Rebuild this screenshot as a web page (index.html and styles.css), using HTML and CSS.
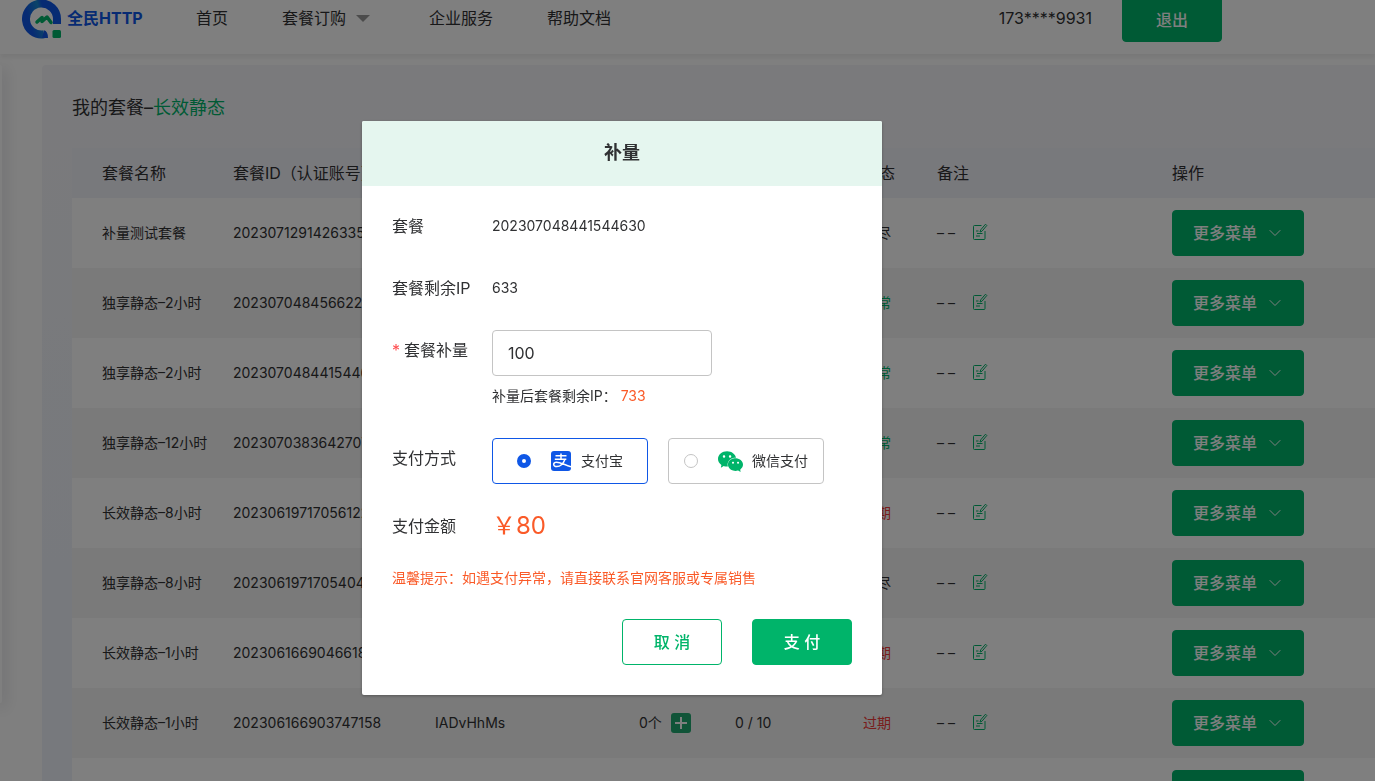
FILE: index.html
```html
<!DOCTYPE html>
<html lang="zh-CN">
<head>
<meta charset="utf-8">
<title>全民HTTP</title>
<link rel="stylesheet" href="styles.css">
</head>
<body>
<svg class="defs" aria-hidden="true">
  <symbol id="note" viewBox="0 0 16 18">
    <path d="M9.500 2.500H2.500a1 1 0 0 0-1 1V15.500a1 1 0 0 0 1 1h9.500a1 1 0 0 0 1-1V8" />
    <path d="M13.500 1.200l1.300 1.300-4.800 5.700-2 .8.700-2.100zM4 8h2.500M5 10.500h5.500M4 13h4" />
  </symbol>
  <symbol id="chevron" viewBox="0 0 12 8">
    <path d="M.7 1.200L6 6.500l5.300-5.300" />
  </symbol>
</svg>

<header class="topbar">
  <a class="logo" href="#">
    <svg class="logo-mark" viewBox="0 0 40 40" aria-hidden="true">
      <defs><linearGradient id="ring" x1="0" y1="0.200" x2="0.700" y2="0">
        <stop offset="0" stop-color="#0f57e6"/><stop offset="0.550" stop-color="#1689d2"/><stop offset="0.750" stop-color="#0f57e6"/>
      </linearGradient></defs>
      <path d="M35 25V20A15.500 15.500 0 1 0 22 35.300" fill="none" stroke="url(#ring)" stroke-width="8"/>
      <path d="M22 31.300q4 1 4 7.700h-6zM31 21h8v4h-8z" fill="#0f57e6"/>
      <path d="M15 23l5-4.500v4l5-4.500 4 5.500" fill="none" stroke="#00b46a" stroke-width="3.500" stroke-linecap="round" stroke-linejoin="round"/>
      <rect x="30.500" y="31" width="8.500" height="8" rx="1.500" fill="#00b46a"/>
    </svg>
    <span>全民HTTP</span>
  </a>
  <nav class="nav">
    <a href="#">首页</a>
    <a class="has-menu" href="#">套餐订购</a>
    <a href="#">企业服务</a>
    <a href="#">帮助文档</a>
  </nav>
  <span class="phone">173****9931</span>
  <button class="btn primary" type="button">退出</button>
</header>

<main class="page">
  <aside class="side"></aside>
  <section class="panel">
    <h1>我的套餐–<span>长效静态</span></h1>
    <table>
      <colgroup><col class="c-name"><col class="c-id"><col class="c-secret"><col class="c-count"><col class="c-used"><col class="c-state"><col class="c-note"><col></colgroup>
      <thead>
        <tr><th>套餐名称</th><th>套餐ID（认证账号）</th><th></th><th></th><th></th><th>状态</th><th>备注</th><th>操作</th></tr>
      </thead>
      <tbody>
        <tr><td>补量测试套餐</td><td>202307129142633560</td><td></td><td></td><td></td><td>用尽</td><td><span class="note">– –<svg><use href="#note"/></svg></span></td><td><button class="btn primary more" type="button">更多菜单<svg><use href="#chevron"/></svg></button></td></tr>
        <tr><td>独享静态–2小时</td><td>202307048456622910</td><td></td><td></td><td></td><td class="ok">正常</td><td><span class="note">– –<svg><use href="#note"/></svg></span></td><td><button class="btn primary more" type="button">更多菜单<svg><use href="#chevron"/></svg></button></td></tr>
        <tr><td>独享静态–2小时</td><td>202307048441544630</td><td></td><td></td><td></td><td class="ok">正常</td><td><span class="note">– –<svg><use href="#note"/></svg></span></td><td><button class="btn primary more" type="button">更多菜单<svg><use href="#chevron"/></svg></button></td></tr>
        <tr><td>独享静态–12小时</td><td>202307038364270710</td><td></td><td></td><td></td><td class="ok">正常</td><td><span class="note">– –<svg><use href="#note"/></svg></span></td><td><button class="btn primary more" type="button">更多菜单<svg><use href="#chevron"/></svg></button></td></tr>
        <tr><td>长效静态–8小时</td><td>202306197170561220</td><td></td><td></td><td></td><td class="expired">过期</td><td><span class="note">– –<svg><use href="#note"/></svg></span></td><td><button class="btn primary more" type="button">更多菜单<svg><use href="#chevron"/></svg></button></td></tr>
        <tr><td>独享静态–8小时</td><td>202306197170540470</td><td></td><td></td><td></td><td>用尽</td><td><span class="note">– –<svg><use href="#note"/></svg></span></td><td><button class="btn primary more" type="button">更多菜单<svg><use href="#chevron"/></svg></button></td></tr>
        <tr><td>长效静态–1小时</td><td>202306166904661810</td><td></td><td></td><td></td><td class="expired">过期</td><td><span class="note">– –<svg><use href="#note"/></svg></span></td><td><button class="btn primary more" type="button">更多菜单<svg><use href="#chevron"/></svg></button></td></tr>
        <tr><td>长效静态–1小时</td><td>202306166903747158</td><td>IADvHhMs</td><td><span class="count">0个<button class="plus" type="button" aria-label="补量"><svg viewBox="0 0 20 20"><path d="M10 4v12M4 10h12"/></svg></button></span></td><td>0 / 10</td><td class="expired">过期</td><td><span class="note">– –<svg><use href="#note"/></svg></span></td><td><button class="btn primary more" type="button">更多菜单<svg><use href="#chevron"/></svg></button></td></tr>
        <tr><td></td><td></td><td></td><td></td><td></td><td></td><td></td><td><button class="btn primary more" type="button" aria-label="更多菜单"></button></td></tr>
      </tbody>
    </table>
  </section>
</main>

<div class="overlay">
  <form class="dialog" role="dialog" aria-labelledby="dialog-title">
    <h2 id="dialog-title">补量</h2>
    <div class="dialog-body">
      <div class="field"><span class="label">套餐</span><span>202307048441544630</span></div>
      <div class="field"><span class="label">套餐剩余IP</span><span>633</span></div>
      <div class="field">
        <label class="label" for="amount"><span class="required">*</span>套餐补量</label>
        <div>
          <input class="amount" id="amount" type="text" value="100">
          <p class="after">补量后套餐剩余IP： <span>733</span></p>
        </div>
      </div>
      <div class="field">
        <span class="label">支付方式</span>
        <div class="methods">
          <label class="method">
            <input type="radio" name="pay" checked>
            <svg class="alipay" viewBox="0 0 20 20" aria-hidden="true">
              <rect width="20" height="20" rx="3" fill="#0f57e6"/>
              <path d="M4.500 4.800h11M10 2.500v5.300M3.800 8.200h11.500" stroke="#fff" stroke-width="1.500" fill="none"/>
              <path d="M14 8.200c-1.500 4-4.500 7.300-8.200 7.300-4.400 0-3.800-4.300-.2-4.300 3.400 0 7.200 2.300 14.400 4.600" stroke="#fff" stroke-width="1.500" fill="none"/>
            </svg>
            支付宝
          </label>
          <label class="method">
            <input type="radio" name="pay">
            <svg class="wechat" viewBox="0 2 24 20" aria-hidden="true">
              <path fill="#00b46a" d="M8.691 2.188C3.891 2.188 0 5.476 0 9.530c0 2.212 1.170 4.203 3.002 5.550a.59.59 0 0 1 .213.665l-.39 1.480c-.019.070-.048.141-.048.213 0 .163.130.295.290.295a.326.326 0 0 0 .167-.054l1.903-1.114a.864.864 0 0 1 .717-.098 10.160 10.160 0 0 0 2.837.403c.276 0 .543-.027.811-.050-.857-2.578.157-4.972 1.932-6.446 1.703-1.415 3.882-1.980 5.853-1.838-.576-3.583-4.196-6.348-8.596-6.348zM5.785 5.991c.642 0 1.162.529 1.162 1.180a1.170 1.170 0 0 1-1.162 1.178A1.170 1.170 0 0 1 4.623 7.170c0-.651.520-1.180 1.162-1.180zm5.813 0c.642 0 1.162.529 1.162 1.180a1.170 1.170 0 0 1-1.162 1.178 1.170 1.170 0 0 1-1.162-1.178c0-.651.520-1.180 1.162-1.180zm5.340 2.867c-1.797-.052-3.746.512-5.280 1.786-1.720 1.428-2.687 3.720-1.780 6.220.942 2.453 3.666 4.229 6.884 4.229.826 0 1.622-.120 2.361-.336a.722.722 0 0 1 .598.082l1.584.926a.272.272 0 0 0 .140.047c.134 0 .240-.111.240-.247 0-.060-.023-.120-.038-.177l-.327-1.233a.582.582 0 0 1-.023-.156.490.490 0 0 1 .201-.398C23.024 18.480 24 16.820 24 14.980c0-3.210-2.931-5.837-6.656-6.088V8.890c-.135-.010-.270-.027-.407-.030zm-2.530 3.274c.535 0 .969.440.969.982a.976.976 0 0 1-.969.983.976.976 0 0 1-.969-.983c0-.542.434-.982.970-.982zm4.844 0c.535 0 .969.440.969.982a.976.976 0 0 1-.969.983.976.976 0 0 1-.969-.983c0-.542.434-.982.969-.982z"/>
            </svg>
            微信支付
          </label>
        </div>
      </div>
      <div class="field"><span class="label">支付金额</span><span class="price">￥80</span></div>
      <p class="tip">温馨提示：如遇支付异常，请直接联系官网客服或专属销售</p>
      <div class="actions">
        <button class="btn outline" type="button">取 消</button>
        <button class="btn primary" type="button">支 付</button>
      </div>
    </div>
  </form>
</div>
</body>
</html>
```
FILE: styles.css
```css
* { box-sizing: border-box; }

body {
  margin: 0;
  height: 100vh;
  overflow: hidden;
  background: #fff;
  color: #303133;
  font: 14px/20px Inter, "Noto Sans CJK SC", sans-serif;
}

a { color: inherit; text-decoration: none; }
h1, h2, p { margin: 0; }
button, input { font: inherit; color: inherit; }
.defs { display: none; }

.btn {
  min-width: 100px;
  height: 46px;
  border: 1px solid #00b46a;
  border-radius: 4px;
  background: #fff;
  color: #00b46a;
  font-size: 16px;
  font-weight: 500;
}
.btn.primary { background: #00b46a; color: #fff; }

.topbar {
  position: relative;
  z-index: 1;
  display: flex;
  align-items: flex-start;
  height: 58px;
  margin-top: -4px;
  padding: 0 153px 0 22px;
  background: #fff;
  font-size: 16px;
  line-height: 45px;
  box-shadow: 0 4px 4px rgba(0, 0, 0, 0.06);
}
.topbar .btn { padding-bottom: 4px; }
.logo {
  display: flex;
  align-items: center;
  gap: 5px;
  width: 120px;
  margin-right: 54px;
  color: #0f57e6;
  font-weight: 700;
  white-space: nowrap;
}
.logo-mark { width: 40px; height: 40px; flex: none; }
.nav { display: flex; flex: 1; gap: 54px; }
.has-menu {
  display: flex;
  align-items: center;
  gap: 10px;
  margin-right: 5px;
}
.has-menu::after {
  content: "";
  border: 7px solid transparent;
  border-top-color: #999;
  border-bottom: 0;
}
.phone { margin-right: 30px; }

.page { display: flex; gap: 40px; padding-top: 11px; }
.side {
  width: 2px;
  height: 638px;
  border-radius: 0 4px 4px 0;
  background: #fff;
  box-shadow: 0 4px 16px 2px rgba(0, 0, 40, 0.2);
}
.panel {
  flex: 1;
  padding: 30px 0 30px 30px;
  border-radius: 4px 0 0 4px;
  background: linear-gradient(#f5f5f9, #eff3fa 500px);
}
h1 {
  margin-bottom: 27px;
  font-size: 18px;
  font-weight: 400;
  line-height: 26px;
}
h1 span, .ok { color: #00b46a; }
.expired { color: #f33a3a; }

table { width: 100%; border-collapse: collapse; table-layout: fixed; }
th, td { padding: 0; text-align: left; white-space: nowrap; }
th {
  height: 50px;
  background: #f0f2f9;
  font-size: 16px;
  font-weight: 400;
}
td { height: 70px; background: #fff; }
tr:nth-child(even) td { background: #f4f4f4; }
th:first-child, td:first-child { padding-left: 30px; }
.c-name { width: 161px; }
.c-id { width: 202px; }
.c-secret { width: 204px; }
.c-count { width: 96px; }
.c-used { width: 128px; }
.c-state { width: 74px; }
.c-note { width: 235px; }

.note, .count { display: flex; align-items: center; }
.note { gap: 17px; }
.note svg {
  width: 16px;
  height: 18px;
  margin-bottom: 2px;
  fill: none;
  stroke: #00b46a;
  stroke-width: 1;
}
.count { gap: 9px; }
.plus {
  width: 20px;
  height: 20px;
  padding: 0;
  border: 0;
  border-radius: 3px;
  background: #20a870;
}
.plus svg { display: block; width: 100%; height: 100%; stroke: #fff; stroke-width: 2; }
.more {
  display: flex;
  align-items: center;
  gap: 12px;
  width: 132px;
  padding: 0 20px;
}
.more svg { width: 12px; height: 8px; fill: none; stroke: #fff; }

.overlay {
  position: fixed;
  inset: 0;
  z-index: 2;
  display: flex;
  justify-content: center;
  align-items: flex-start;
  padding: 121px 131px 0 0;
  background: rgba(0, 0, 0, 0.5);
}
.dialog {
  width: 520px;
  border-radius: 2px;
  overflow: hidden;
  background: #fff;
  box-shadow: 0 1px 3px rgba(0, 0, 0, 0.3);
}
h2 {
  padding-bottom: 2px;
  background: #e5f6ef;
  font-size: 18px;
  font-weight: 700;
  line-height: 63px;
  text-align: center;
}
.dialog-body { padding: 20px 30px 30px; }
.field {
  display: grid;
  grid-template-columns: 100px 1fr;
  margin-bottom: 22px;
  line-height: 40px;
}
.label { font-size: 16px; }
.required { margin-right: 4px; color: #ff4d4f; }
.amount {
  display: block;
  width: 220px;
  height: 46px;
  padding: 0 15px;
  border: 1px solid #c4c4c4;
  border-radius: 4px;
  font-size: 16px;
}
.after span, .tip, .price { color: #fa5a28; }
.methods { display: flex; gap: 20px; }
.method {
  display: flex;
  align-items: center;
  justify-content: center;
  width: 156px;
  height: 46px;
  border: 1px solid #c4c4c4;
  border-radius: 4px;
}
.method:has(:checked) { border-color: #0f57e6; }
.method input {
  appearance: none;
  width: 14px;
  height: 14px;
  margin: 0 20px 0 0;
  border: 1px solid #c4c4c4;
  border-radius: 50%;
}
.method input:checked { border: 5px solid #0f57e6; }
.alipay { width: 20px; height: 20px; margin-right: 10px; }
.wechat { width: 25px; height: 21px; margin-right: 9px; }
.price { font-size: 24px; }
.actions {
  display: flex;
  justify-content: flex-end;
  gap: 30px;
  margin-top: 31px;
}
```
